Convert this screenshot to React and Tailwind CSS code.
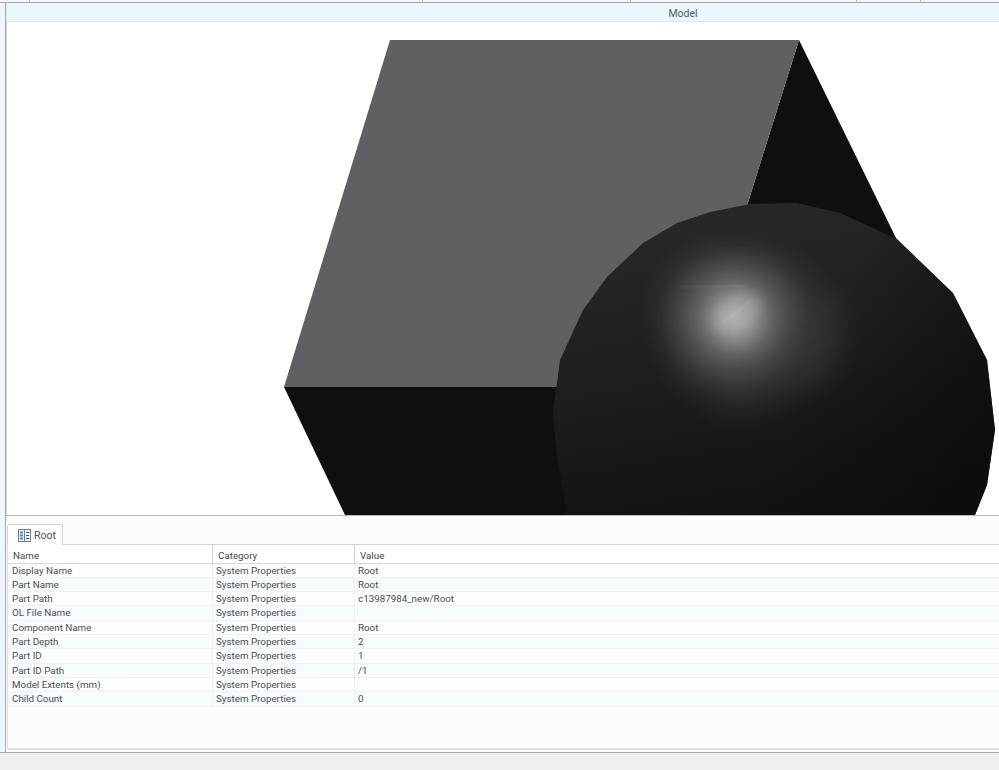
const rows = [
  ["Display Name", "System Properties", "Root"],
  ["Part Name", "System Properties", "Root"],
  ["Part Path", "System Properties", "c13987984_new/Root"],
  ["OL File Name", "System Properties", ""],
  ["Component Name", "System Properties", "Root"],
  ["Part Depth", "System Properties", "2"],
  ["Part ID", "System Properties", "1"],
  ["Part ID Path", "System Properties", "/1"],
  ["Model Extents (mm)", "System Properties", ""],
  ["Child Count", "System Properties", "0"],
];

const topCells = ["w-[30px]", "w-[393px]", "w-[208px]", "w-[226px]", "w-[64px]", "flex-1"];

const ballPoints =
  "553,413 560,360 583,310 607,277 643,243 677,223 710,212 750,204 797,203 840,213 897,239 953,293 987,360 995,430 987,485 975,515 567,515 557,457";

function ModelView() {
  return (
    <svg viewBox="7 22 992 493" className="block w-full h-[493px]">
      <defs>
        <linearGradient id="ball" x1="0.35" y1="0" x2="0.6" y2="1">
          <stop offset="0" stopColor="#28282b" />
          <stop offset="0.5" stopColor="#1e1e20" />
          <stop offset="0.8" stopColor="#151517" />
          <stop offset="1" stopColor="#111113" />
        </linearGradient>
        <linearGradient id="shade" x1="0" y1="0.3" x2="1" y2="0.6">
          <stop offset="0.6" stopColor="#0c0c0e" stopOpacity="0" />
          <stop offset="1" stopColor="#0c0c0e" stopOpacity="0.75" />
        </linearGradient>
        <radialGradient id="glow">
          <stop offset="0" stopColor="#ffffff" stopOpacity="0.6" />
          <stop offset="0.25" stopColor="#ffffff" stopOpacity="0.45" />
          <stop offset="0.48" stopColor="#ffffff" stopOpacity="0.22" />
          <stop offset="0.72" stopColor="#ffffff" stopOpacity="0.08" />
          <stop offset="1" stopColor="#ffffff" stopOpacity="0" />
        </radialGradient>
        <clipPath id="ballClip">
          <polygon points={ballPoints} />
        </clipPath>
        <filter id="soft" x="-50%" y="-50%" width="200%" height="200%">
          <feGaussianBlur stdDeviation="5" />
        </filter>
        <filter id="wide" x="-50%" y="-50%" width="200%" height="200%">
          <feGaussianBlur stdDeviation="16" />
        </filter>
        <filter id="thin" x="-20%" y="-200%" width="140%" height="500%">
          <feGaussianBlur stdDeviation="1" />
        </filter>
      </defs>
      <polygon points="799,40 897,240 897,515 345,515 284,387 690,387" fill="#0f0f11" />
      <polygon points="390,40 799,40 690,387 284,387" fill="#606064" />
      <polygon points={ballPoints} fill="url(#ball)" />
      <polygon points={ballPoints} fill="url(#shade)" />
      <g clipPath="url(#ballClip)">
        <polygon points="665,280 700,250 780,255 840,310 835,370 790,395 735,415 680,380 660,330" fill="#ffffff" opacity="0.09" filter="url(#wide)" />
        <ellipse cx="735" cy="318" rx="78" ry="78" fill="url(#glow)" filter="url(#soft)" />
        <ellipse cx="738" cy="312" rx="28" ry="17" fill="#ffffff" opacity="0.1" transform="rotate(-35 738 312)" filter="url(#soft)" />
        <line x1="722" y1="323" x2="752" y2="300" stroke="#ffffff" strokeWidth="3" opacity="0.08" filter="url(#thin)" />
        <line x1="680" y1="287" x2="746" y2="286" stroke="#ffffff" strokeWidth="1.5" opacity="0.1" filter="url(#thin)" />
      </g>
    </svg>
  );
}

function TabIcon() {
  return (
    <svg viewBox="0 0 13 13" className="w-[13px] h-[13px]">
      <rect x="0.5" y="0.5" width="12" height="12" fill="#f4f8fb" stroke="#6f8291" />
      <rect x="2" y="2.5" width="3" height="2" fill="#3d8fc4" />
      <rect x="2" y="5.5" width="3" height="2" fill="#3d8fc4" />
      <rect x="2" y="8.5" width="3" height="2" fill="#3d8fc4" />
      <path d="M6.5 0.5V12.5" stroke="#6f8291" />
      <path d="M8 3.5H11M8 6.5H11M8 9.5H11" stroke="#44525c" />
    </svg>
  );
}

export default function App() {
  return (
    <div className="w-[999px] h-[770px] overflow-hidden flex flex-col bg-white text-[#4b4f54] text-[9.8px] font-['Roboto','Open_Sans',sans-serif]">
      <div className="flex h-[3px] border-b border-[#a9a9a9] bg-[#f3f3f3]">
        {topCells.map((w, i) => (
          <div key={i} className={`${w} border-r border-[#c4c4c4] last:border-r-0`} />
        ))}
      </div>

      <div className="flex flex-1 min-h-0">
        <div className="w-[6px] bg-[#eef6fc] border-r border-[#a9a9a9]" />
        <div className="flex-1 min-w-0 flex flex-col">
          <div className="h-[19px] pt-[3px] bg-[#ebf6fd] border-b border-[#d6e8f0] border-l border-[#c9d3d9] flex items-center justify-center pl-[360px] text-[10.5px] text-[#55595e]">
            Model
          </div>
          <div className="h-[493px] border-l border-[#c9d3d9]">
            <ModelView />
          </div>
          <div className="flex-1 min-h-0 flex flex-col bg-[#fcfcfc] border-t border-[#b9b9b9] pt-[8px] pl-[1px]">
            <div className="h-[21px] flex items-end border-b border-[#d2d2d2]">
              <div className="w-[56px] h-[21px] -mb-px flex items-center gap-[3px] pl-[10px] pt-[1px] bg-white border border-b-0 border-[#d2d2d2] rounded-t-[2px] text-[10.5px]">
                <TabIcon />
                <span>Root</span>
              </div>
            </div>
            <div className="flex-1 min-h-0 border-l border-b-2 border-[#dedede] bg-[#fcfcfc]">
              <div className="grid grid-cols-[204px_142px_1fr] h-[18.5px] bg-white border-b border-[#d9d9d9] text-[#44484c]">
                <div className="pl-[5px] pt-[4px]">Name</div>
                <div className="pl-[5px] pt-[4px] border-l border-[#d2d2d2]">Category</div>
                <div className="pl-[5px] pt-[4px] border-l border-[#d2d2d2]">Value</div>
              </div>
              {rows.map((row, i) => (
                <div
                  key={row[0]}
                  className={`grid grid-cols-[204px_142px_1fr] h-[14.33px] leading-[14px] border-b border-[#eef3f5] ${
                    i % 2 ? "bg-[#f6fbfe]" : "bg-[#fdfdfd]"
                  }`}
                >
                  <div className="pl-[4px]">{row[0]}</div>
                  <div className="pl-[3px] border-l border-[#eef1f3]">{row[1]}</div>
                  <div className="pl-[3px] border-l border-[#eef1f3]">{row[2]}</div>
                </div>
              ))}
            </div>
            <div className="h-[2px]" />
          </div>
        </div>
      </div>

      <div className="h-[18px] bg-[#eeeff1] border-t border-[#a9a9a9]" />
    </div>
  );
}
